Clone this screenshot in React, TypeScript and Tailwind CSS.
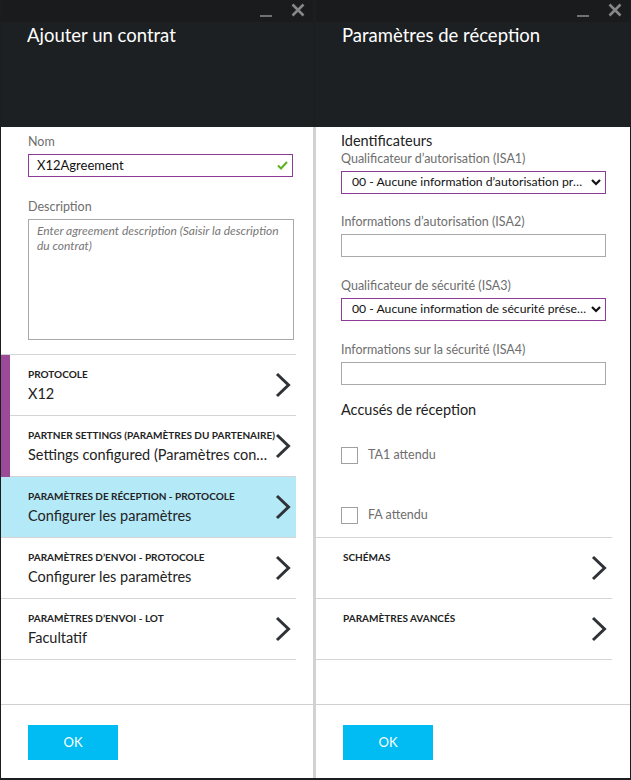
import React from 'react';

const font = { fontFamily: 'Lato, "Open Sans", sans-serif' };

function WindowButtons() {
	return (
		<div className="h-[22px] bg-[#191b1d] flex justify-end items-center gap-[19px] pr-[8px]">
			<div className="w-[12px] h-[2px] bg-[#6f7173] mt-[10px]" />
			<svg width="14" height="14" viewBox="0 0 14 14" className="mt-[-2px]">
				<path d="M1.5 1.5 L12.5 12.5 M12.5 1.5 L1.5 12.5" stroke="#85878a" strokeWidth="2.6" />
			</svg>
		</div>
	);
}

function Header({ title }: { title: string }) {
	return (
		<div className="h-[127px] bg-[#1d2022] shrink-0">
			<WindowButtons />
			<div className="pl-[26px] pt-[1px] text-[18.5px] leading-[24px] text-white">{title}</div>
		</div>
	);
}

function Chevron() {
	return (
		<svg width="16" height="26" viewBox="0 0 16 26" className="shrink-0">
			<path d="M2 2 L13.5 13 L2 24" stroke="#2f3337" strokeWidth="3" fill="none" />
		</svg>
	);
}

function Row({ title, value, accent, active }: { title: string; value?: string; accent?: boolean; active?: boolean }) {
	return (
		<div className={`relative h-[61px] border-b border-[#d4d4d4] flex items-center pl-[27px] pr-[5px] ${active ? 'bg-[#b4e9f8]' : ''}`}>
			{accent && <div className="absolute left-0 top-0 bottom-[-1px] w-[9px] bg-[#9b4a97]" />}
			<div className="flex-1 min-w-0 self-start pt-[13px]">
				<div className="text-[10px] leading-[13px] font-bold text-[#222] whitespace-nowrap">{title}</div>
				{value && <div className="text-[14.5px] leading-[20px] text-[#222] mt-[3px] truncate pr-[6px]">{value}</div>}
			</div>
			<Chevron />
		</div>
	);
}

function Footer() {
	return (
		<div className="h-[74px] border-t border-[#d0d0d0] shrink-0 pl-[27px] pt-[20px]">
			<button className="w-[90px] h-[35px] bg-[#00bcf2] text-white text-[13px]">OK</button>
		</div>
	);
}

function Label({ children, className = '' }: { children: React.ReactNode; className?: string }) {
	return <div className={`text-[12.5px] leading-[16px] text-[#6e6e6e] ${className}`}>{children}</div>;
}

function SelectBox({ text }: { text: string }) {
	return (
		<div className="h-[23px] w-[265px] border border-[#8c3c96] flex items-center pl-[10px] pr-[4px] mt-[4px]">
			<span className="flex-1 min-w-0 text-[12.2px] text-[#111] truncate pr-[4px]">{text}</span>
			<svg width="10" height="7" viewBox="0 0 10 7" className="shrink-0">
				<path d="M1 1 L5 5 L9 1" stroke="#111" strokeWidth="2.2" fill="none" />
			</svg>
		</div>
	);
}

function TextBox() {
	return <div className="h-[23px] w-[265px] border border-[#a9a9a9] mt-[4px]" />;
}

function Checkbox({ label }: { label: string }) {
	return (
		<div className="flex items-center gap-[10px]">
			<div className="w-[17px] h-[17px] border border-[#a0a0a0] bg-white" />
			<span className="text-[12.5px] text-[#6e6e6e]">{label}</span>
		</div>
	);
}

function LeftPanel() {
	return (
		<div className="w-[312px] flex flex-col bg-white">
			<Header title="Ajouter un contrat" />
			<div className="flex-1 flex flex-col">
				<div className="pl-[27px] pr-[20px] pt-[7px] pb-[14px]">
					<Label>Nom</Label>
					<div className="mt-[4px] h-[23px] w-[265px] border border-[#8c3c96] flex items-center pl-[8px] pr-[4px]">
						<span className="flex-1 text-[13px] text-[#111]">X12Agreement</span>
						<svg width="11" height="9" viewBox="0 0 11 9">
							<path d="M1 4.5 L4 7.5 L10 1" stroke="#5cb31d" strokeWidth="2" fill="none" />
						</svg>
					</div>
					<Label className="mt-[22px]">Description</Label>
					<div className="mt-[4px] h-[121px] w-[266px] border border-[#a9a9a9] pl-[8px] pr-[4px] pt-[3px] text-[12px] leading-[15px] italic text-[#777]">
						Enter agreement description (Saisir la description du contrat)
					</div>
				</div>
				<div className="w-[295px] border-t border-[#d4d4d4]">
					<Row title="PROTOCOLE" value="X12" accent />
					<Row title="PARTNER SETTINGS (PARAMÈTRES DU PARTENAIRE)" value="Settings configured (Paramètres configurés)" accent />
					<Row title="PARAMÈTRES DE RÉCEPTION - PROTOCOLE" value="Configurer les paramètres" active />
					<Row title="PARAMÈTRES D’ENVOI - PROTOCOLE" value="Configurer les paramètres" />
					<Row title="PARAMÈTRES D’ENVOI - LOT" value="Facultatif" />
				</div>
				<div className="flex-1" />
			</div>
			<Footer />
		</div>
	);
}

function RightPanel() {
	return (
		<div className="flex-1 flex flex-col bg-white">
			<Header title="Paramètres de réception" />
			<div className="flex-1 flex flex-col">
				<div className="pl-[25px] pt-[5px]">
					<div className="text-[14.5px] leading-[18px] text-[#222]">Identificateurs</div>
					<Label className="mt-[1px]">Qualificateur d’autorisation (ISA1)</Label>
					<SelectBox text="00 - Aucune information d’autorisation présente" />
					<Label className="mt-[20px]">Informations d’autorisation (ISA2)</Label>
					<TextBox />
					<Label className="mt-[21px]">Qualificateur de sécurité (ISA3)</Label>
					<SelectBox text="00 - Aucune information de sécurité présente" />
					<Label className="mt-[21px]">Informations sur la sécurité (ISA4)</Label>
					<TextBox />
					<div className="text-[14.5px] leading-[18px] text-[#222] mt-[16px]">Accusés de réception</div>
					<div className="mt-[27px]">
						<Checkbox label="TA1 attendu" />
					</div>
					<div className="mt-[41px] mb-[12px]">
						<Checkbox label="FA attendu" />
					</div>
				</div>
				<div className="w-[296px] border-t border-[#d4d4d4]">
					<Row title="SCHÉMAS" />
					<Row title="PARAMÈTRES AVANCÉS" />
				</div>
				<div className="flex-1" />
			</div>
			<Footer />
		</div>
	);
}

export default function App() {
	return (
		<div style={font} className="w-[631px] h-[780px] flex bg-[#d0d0d0] border-l border-r border-b-2 border-[#1b1e20] overflow-hidden">
			<LeftPanel />
			<div className="w-[3px] flex flex-col">
				<div className="h-[127px] bg-[#1b1f1f]" />
				<div className="flex-1 bg-[#d2d2d2]" />
			</div>
			<RightPanel />
		</div>
	);
}
